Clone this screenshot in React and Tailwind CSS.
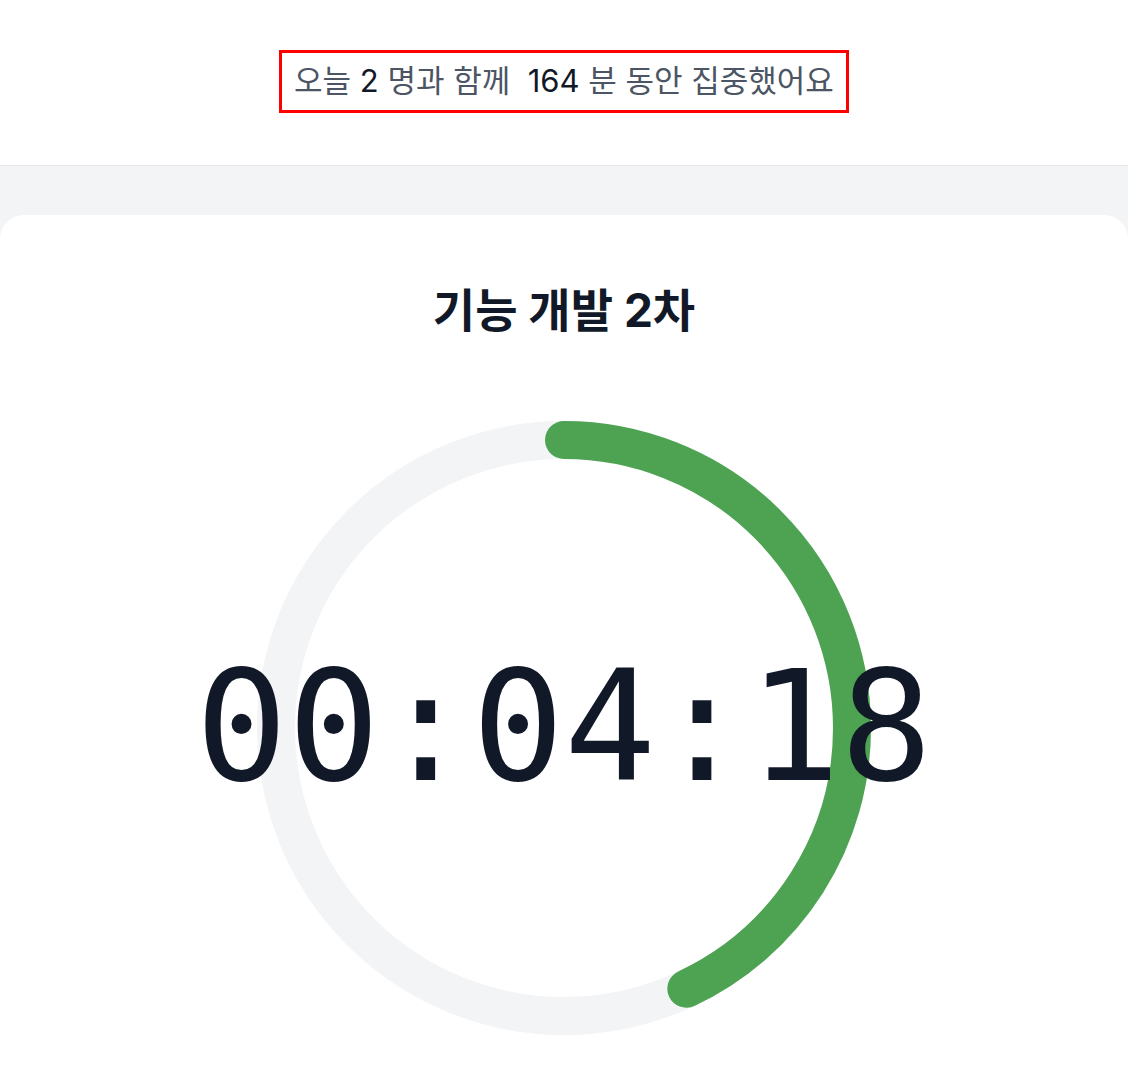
import React from 'react';

const R = 288;
const C = 2 * Math.PI * R;

function ProgressRing({ progress }) {
  return (
    <svg width="616" height="616" viewBox="0 0 616 616" className="block">
      <circle cx="308" cy="308" r={R} fill="none" stroke="#f3f4f6" strokeWidth="38" />
      <circle
        cx="308"
        cy="308"
        r={R}
        fill="none"
        stroke="#4ea353"
        strokeWidth="38"
        strokeLinecap="round"
        strokeDasharray={C}
        strokeDashoffset={C * (1 - progress)}
        transform="rotate(-90 308 308)"
      />
    </svg>
  );
}

export default function App() {
  return (
    <div className="min-h-screen bg-[#f3f4f6] font-['Inter','Noto_Sans_CJK_KR',sans-serif]">
      <header className="h-[166px] bg-white border-b border-[#e5e7eb] flex justify-center pt-[50px]">
        <div className="h-[63px] px-[12px] border-[3px] border-[#ff0000] flex items-center text-[31px] text-[#4b5563] whitespace-pre">
          오늘 <span className="text-[#111827]">2</span> 명과 함께  <span className="text-[#111827]">164</span> 분 동안 집중했어요
        </div>
      </header>

      <main className="pt-[49px]">
        <section className="bg-white rounded-t-[24px] pt-[67px] pb-[80px] flex flex-col items-center">
          <h1 className="text-[46px] font-bold text-[#111827] leading-tight">기능 개발 2차</h1>
          <div className="relative mt-[80px]">
            <ProgressRing progress={0.43} />
            <div className="absolute inset-0 flex items-center justify-center font-['DejaVu_Sans_Mono',monospace] slashed-zero text-[153px] leading-none text-[#111827]">
              00:04:18
            </div>
          </div>
        </section>
      </main>
    </div>
  );
}
